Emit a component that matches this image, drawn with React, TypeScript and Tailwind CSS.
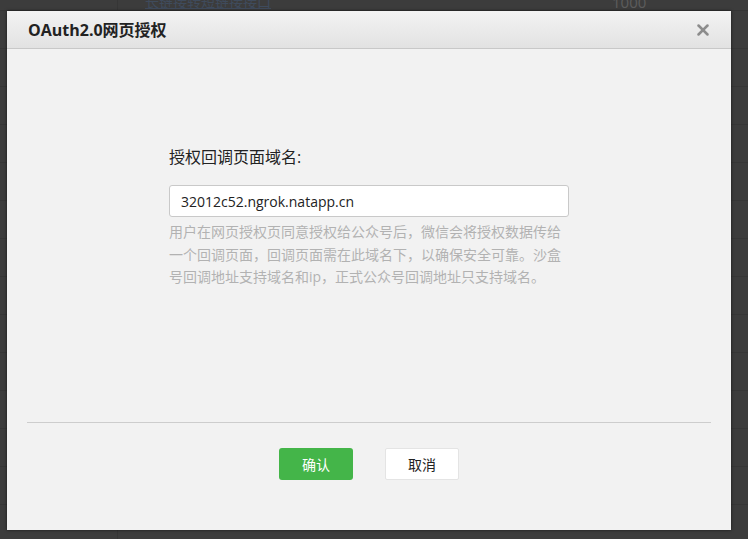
import { X } from 'lucide-react';

const rows = Array.from({ length: 14 });

export default function App() {
  return (
    <div
      className="relative w-[748px] h-[539px] overflow-hidden bg-[#3c3c3c]"
      style={{ fontFamily: '"Open Sans", "Noto Sans CJK SC", sans-serif' }}
    >
      {/* dimmed page behind the dialog */}
      <div className="flex flex-col">
        <div className="flex h-[11px] items-end border-b border-[#353535]">
          <div className="w-[118px] h-full border-r border-[#363636]" />
          <div className="w-[494px] pl-[27px] text-[14px] leading-[16px] text-[#3f4b5c] underline -mt-2">
            长链接转短链接接口
          </div>
          <div className="text-[15px] leading-[16px] text-[#5c5c5c] -mt-2">1000</div>
        </div>
        {rows.map((_, i) => (
          <div key={i} className="flex h-[38px] border-b border-[#363636]">
            <div className="w-[118px] h-full border-r border-[#363636]" />
          </div>
        ))}
      </div>

      {/* dialog */}
      <div className="absolute left-[7px] top-[11px] w-[724px] h-[519px] flex flex-col bg-[#f2f2f2] shadow-[0_0_3px_rgba(0,0,0,0.6)]">
        <div className="flex h-[38px] items-center justify-between border-b border-[#c8c8c8] bg-gradient-to-b from-[#f3f3f3] to-[#e2e2e2] pl-[21px] pr-[19px]">
          <h2 className="text-[16px] font-bold text-[#222]">OAuth2.0网页授权</h2>
          <X size={18} strokeWidth={3.4} className="text-[#8c8c8c]" />
        </div>

        <div className="flex flex-1 flex-col">
          <div className="flex flex-col pl-[162px] pt-[97px]">
            <label className="text-[16px] leading-[22px] text-[#222]">授权回调页面域名:</label>
            <input
              readOnly
              value="32012c52.ngrok.natapp.cn"
              className="mt-[17px] h-[32px] w-[400px] rounded-[3px] border border-[#c9c9c9] bg-white px-[11px] text-[14px] text-[#222] outline-none"
            />
            <p className="mt-[4px] w-[400px] text-[14px] leading-[22.5px] text-[#b2b2b2]">
              用户在网页授权页同意授权给公众号后，微信会将授权数据传给一个回调页面，回调页面需在此域名下，以确保安全可靠。沙盒号回调地址支持域名和ip，正式公众号回调地址只支持域名。
            </p>
          </div>

          <div className="mt-auto mx-[20px] border-t border-[#cdcdcd]" />

          <div className="flex h-[107px] justify-center gap-[32px] pt-[25px]">
            <button className="h-[32px] w-[74px] rounded-[3px] bg-[#44b549] text-[14px] text-white">确认</button>
            <button className="h-[32px] w-[74px] rounded-[2px] border border-[#e4e4e4] bg-white text-[14px] text-[#222]">取消</button>
          </div>
        </div>
      </div>
    </div>
  );
}
